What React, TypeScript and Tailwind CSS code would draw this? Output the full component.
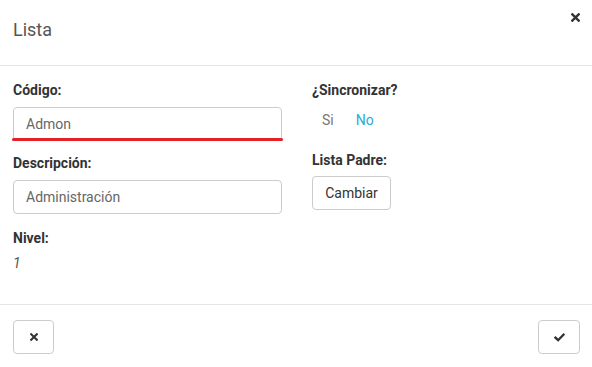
import React from "react";

const XIcon = ({ size = 8 }: { size?: number }) => (
  <svg width={size} height={size} viewBox="0 0 10 10">
    <path d="M1.5 1.5 L8.5 8.5 M8.5 1.5 L1.5 8.5" stroke="#333" strokeWidth="2.6" strokeLinecap="square" />
  </svg>
);

const CheckIcon = () => (
  <svg width="11" height="9" viewBox="0 0 12 10">
    <path d="M1.5 5.2 L4.5 8 L10.5 1.8" stroke="#333" strokeWidth="2.6" fill="none" strokeLinecap="square" />
  </svg>
);

export default function App() {
  return (
    <div className="w-[592px] h-[367px] bg-white text-[14px] text-[#333]" style={{ fontFamily: "Roboto, 'Liberation Sans', sans-serif" }}>
      <div className="h-[66px] border-b border-[#e5e5e5] flex items-start justify-between pl-[13px] pr-[12px]">
        <div className="pt-[17px] text-[18px] leading-[26px] text-[#555]">Lista</div>
        <div className="pt-[13px]"><XIcon size={9} /></div>
      </div>
      <div className="h-[239px] border-b border-[#e5e5e5] px-[13px] pt-[14px] grid grid-cols-[269px_269px] gap-x-[30px]">
        <div className="flex flex-col">
          <div className="font-bold leading-[20px]">Código:</div>
          <div className="mt-[7px] relative">
            <div className="h-[34px] border border-[#ccc] rounded-[4px] px-[12px] flex items-center text-[#666]">Admon</div>
            <div className="h-[3px] bg-[#e32127] rounded-full -mt-[3px] -mx-px"></div>
          </div>
          <div className="mt-[12px] font-bold leading-[20px]">Descripción:</div>
          <div className="mt-[7px] h-[34px] border border-[#ccc] rounded-[4px] px-[12px] flex items-center text-[#666]">Administración</div>
          <div className="mt-[14px] font-bold leading-[20px]">Nivel:</div>
          <div className="mt-[5px] italic leading-[20px] text-[#555]">1</div>
        </div>
        <div className="flex flex-col items-start">
          <div className="font-bold leading-[20px]">¿Sincronizar?</div>
          <div className="mt-[10px] flex leading-[20px] pl-[10px]">
            <span className="text-[#777]">Si</span>
            <span className="ml-[22px] text-[#2aabd2]">No</span>
          </div>
          <div className="mt-[20px] font-bold leading-[20px]">Lista Padre:</div>
          <div className="mt-[6px] h-[34px] w-[79px] border border-[#ccc] rounded-[4px] flex items-center justify-center text-[#333]">Cambiar</div>
        </div>
      </div>
      <div className="flex justify-between pl-[13px] pr-[12px] pt-[15px]">
        <div className="w-[41px] h-[34px] border border-[#ccc] rounded-[4px] flex items-center justify-center"><XIcon /></div>
        <div className="w-[42px] h-[34px] border border-[#ccc] rounded-[4px] flex items-center justify-center"><CheckIcon /></div>
      </div>
    </div>
  );
}
